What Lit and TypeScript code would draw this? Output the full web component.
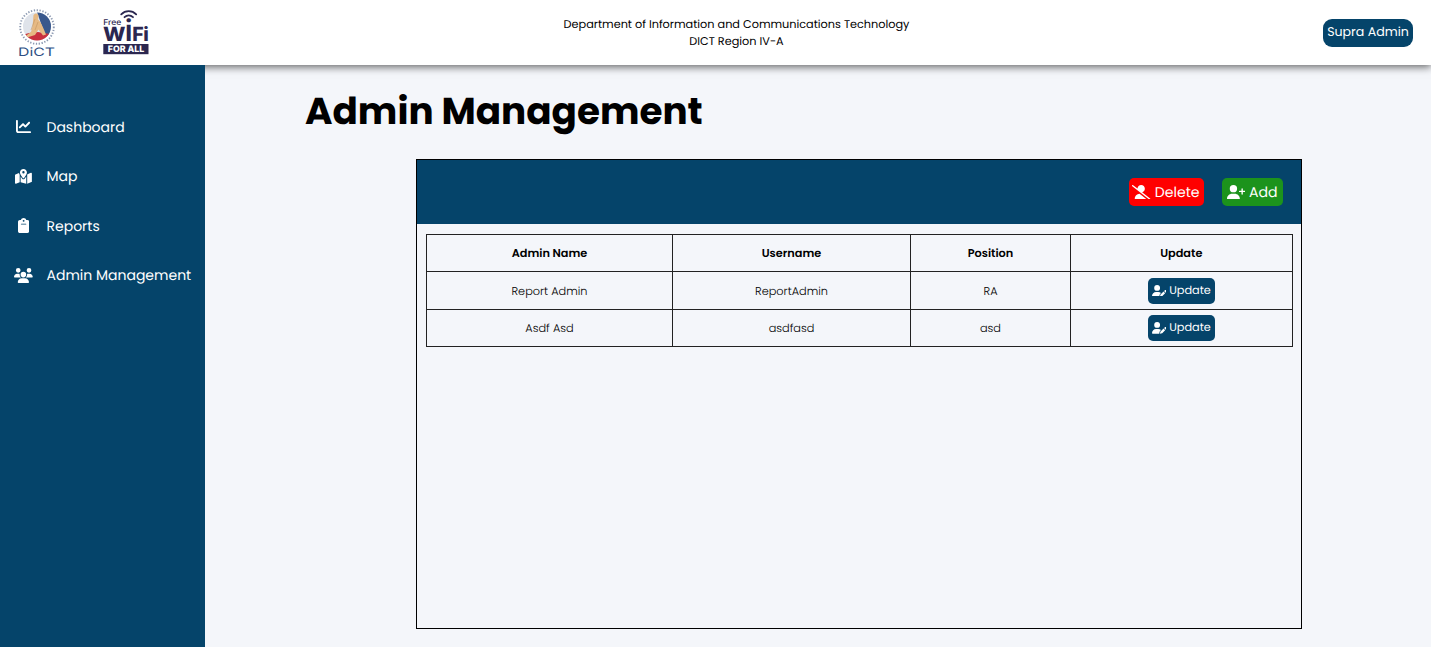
import { LitElement, html, css, svg } from "lit";
import { customElement, property } from "lit/decorators.js";

const ICONS: Record<string, { w: number; d: string }> = {
  chart: { w: 512, d: "M64 64c0-17.7-14.3-32-32-32S0 46.3 0 64V400c0 44.2 35.8 80 80 80H480c17.7 0 32-14.3 32-32s-14.3-32-32-32H80c-8.8 0-16-7.2-16-16V64zm406.6 86.6c12.5-12.5 12.5-32.8 0-45.3s-32.8-12.5-45.3 0L320 210.7l-57.4-57.4c-12.5-12.5-32.8-12.5-45.3 0l-112 112c-12.5 12.5-12.5 32.8 0 45.3s32.8 12.5 45.3 0L240 221.3l57.4 57.4c12.5 12.5 32.8 12.5 45.3 0l128-128z" },
  map: { w: 576, d: "M408 120c0 54.6-73.1 151.9-105.2 192c-7.7 9.6-22 9.6-29.6 0C241.1 271.9 168 174.6 168 120C168 53.7 221.7 0 288 0s120 53.7 120 120zm8 80.4c3.5-6.9 6.7-13.8 9.6-20.6c.5-1.2 1-2.5 1.5-3.7l116-46.4C558.9 123.4 576 135 576 152V422.8c0 9.8-6 18.6-15.1 22.3L416 503V200.4zM137.6 138.3c2.4 14.1 7.2 28.3 12.8 41.5c2.9 6.8 6.1 13.7 9.6 20.6V451.8L32.9 502.7C17.1 509 0 497.4 0 480.4V209.6c0-9.8 6-18.6 15.1-22.3l122.6-49zM327.8 332c13.9-17.4 35.7-45.7 56.2-77V504.3L192 449.4V255c20.5 31.3 42.3 59.6 56.2 77c20.5 25.6 59.1 25.6 79.6 0zM288 152a40 40 0 1 0 0-80 40 40 0 1 0 0 80z" },
  clipboard: { w: 384, d: "M192 0c-41.8 0-77.4 26.7-90.5 64H64C28.7 64 0 92.7 0 128V448c0 35.3 28.7 64 64 64H320c35.3 0 64-28.7 64-64V128c0-35.3-28.7-64-64-64H282.5C269.4 26.7 233.8 0 192 0zm0 64a32 32 0 1 1 0 64 32 32 0 1 1 0-64zM112 192H272c8.8 0 16 7.2 16 16s-7.2 16-16 16H112c-8.8 0-16-7.2-16-16s7.2-16 16-16z" },
  users: { w: 640, d: "M144 0a80 80 0 1 1 0 160A80 80 0 1 1 144 0zM512 0a80 80 0 1 1 0 160A80 80 0 1 1 512 0zM0 298.7C0 239.8 47.8 192 106.7 192h42.7c15.9 0 31 3.5 44.6 9.7c-1.3 7.2-1.9 14.7-1.9 22.3c0 38.2 16.8 72.5 43.3 96c-.2 0-.4 0-.7 0H21.3C9.6 320 0 310.4 0 298.7zM405.3 320c-.2 0-.4 0-.7 0c26.6-23.5 43.3-57.8 43.3-96c0-7.6-.7-15-1.9-22.3c13.6-6.3 28.7-9.7 44.6-9.7h42.7C592.2 192 640 239.8 640 298.7c0 11.8-9.6 21.3-21.3 21.3H405.3zM224 224a96 96 0 1 1 192 0 96 96 0 1 1 -192 0zM128 485.3C128 411.7 187.7 352 261.3 352H378.7C452.3 352 512 411.7 512 485.3c0 14.7-11.9 26.7-26.7 26.7H154.7c-14.7 0-26.7-11.9-26.7-26.7z" },
  userSlash: { w: 640, d: "M38.8 5.1C28.4-3.1 13.3-1.2 5.1 9.2S-1.2 34.7 9.2 42.9l592 464c10.4 8.2 25.5 6.3 33.7-4.1s6.3-25.5-4.1-33.7L353.3 251.6C407.9 237 448 187.2 448 128C448 57.3 390.7 0 320 0C250.2 0 193.5 55.8 192 125.2L38.8 5.1zM264.3 304.3C170.5 309.4 96 387.2 96 482.3c0 16.4 13.3 29.7 29.7 29.7H514.3c3.9 0 7.6-.7 11-2.1l-261-205.6z" },
  userPlus: { w: 640, d: "M96 128a128 128 0 1 1 256 0A128 128 0 1 1 96 128zM0 482.3C0 383.8 79.8 304 178.3 304h91.4C368.2 304 448 383.8 448 482.3c0 16.4-13.3 29.7-29.7 29.7H29.7C13.3 512 0 498.7 0 482.3zM504 312V248H440c-13.3 0-24-10.7-24-24s10.7-24 24-24h64V136c0-13.3 10.7-24 24-24s24 10.7 24 24v64h64c13.3 0 24 10.7 24 24s-10.7 24-24 24H552v64c0 13.3-10.7 24-24 24s-24-10.7-24-24z" },
  userPen: { w: 640, d: "M224 256A128 128 0 1 0 224 0a128 128 0 1 0 0 256zm-45.7 48C79.8 304 0 383.8 0 482.3C0 498.7 13.3 512 29.7 512H322.8c-3.1-8.8-3.7-18.4-1.4-27.8l15-60.1c2.8-11.3 8.6-21.5 16.8-29.7l40.3-40.3c-32.1-31-75.7-50.1-123.9-50.1H178.3zm435.5-68.3c-15.6-15.6-40.9-15.6-56.6 0l-29.4 29.4 71 71 29.4-29.4c15.6-15.6 15.6-40.9 0-56.6l-14.4-14.4zM375.9 417c-4.1 4.1-7 9.2-8.4 14.9l-15 60.1c-1.4 5.5 .2 11.2 4.2 15.2s9.7 5.6 15.2 4.2l60.1-15c5.6-1.4 10.8-4.3 14.9-8.4L576.1 358.7l-71-71L375.9 417z" },
};

@customElement("fa-icon")
class FaIcon extends LitElement {
  @property() name = "";
  static styles = css`
    :host { display: inline-flex; flex: none; }
    svg { height: 1em; width: auto; fill: currentColor; display: block; }
  `;
  render() {
    const icon = ICONS[this.name];
    return html`<svg viewBox="0 0 ${icon.w} 512">${svg`<path d=${icon.d}></path>`}</svg>`;
  }
}

@customElement("dict-logo")
class DictLogo extends LitElement {
  static styles = css`
    :host, svg { display: block; }
    svg { overflow: visible; }
    .word { font: 400 11.7px Inter, sans-serif; fill: #2d4f84; }
  `;
  render() {
    return html`<svg width="38" height="50" viewBox="0 0 38 50">
      <defs><clipPath id="disc"><circle cx="19" cy="18.5" r="14"></circle></clipPath></defs>
      <circle cx="19" cy="19" r="16.800" fill="none" stroke="#8d9ab2" stroke-width="1.900" stroke-dasharray="1.300 1.600"></circle>
      <g clip-path="url(#disc)">
        <rect x="4" y="4" width="30" height="30" fill="#dfe3ea"></rect>
        <path d="M19 4h16v26l-8-3z" fill="#39588c"></path>
        <path d="M4 27l7-2 9-1 12 2 2 9H6z" fill="#c9303f"></path>
        <path d="M15.500 7c1.500-2.500 5-2 5 1l-.5 3.500c3.500 3 5.500 9 8 15l-3 1-4.500-6-3.500 5.500-8 2.500-1.500-1.500 5.500-4 1.500-5z" fill="#e6b983"></path>
        <path d="M17 11l-4 11M20 14l-3 8" stroke="#c39563" stroke-width=".6" fill="none"></path>
      </g>
      <text class="word" x="0" y="48.200" textLength="37" lengthAdjust="spacingAndGlyphs">DiCT</text>
    </svg>`;
  }
}

@customElement("wifi-logo")
class WifiLogo extends LitElement {
  static styles = css`
    :host, svg { display: block; }
    svg { overflow: visible; }
    text { font-family: Inter, sans-serif; fill: #2b2750; }
    .free { font-size: 8px; font-weight: 500; }
    .wifi { font-size: 19.500px; font-weight: 800; }
    .tall { font-size: 30px; font-weight: 600; }
    .all { font-size: 8.800px; font-weight: 800; fill: #fff; }
  `;
  render() {
    return html`<svg width="47" height="48" viewBox="0 0 47 48">
      <g fill="none" stroke="#2b2750" stroke-width="1.800" stroke-linecap="round">
        <path d="M18.200 7.300c4.200-4.300 10.800-4.300 15 0"></path>
        <path d="M21.500 10.200c2.500-2.300 6-2.300 8.500 0"></path>
      </g>
      <text class="free" x="0.300" y="18" textLength="18" lengthAdjust="spacingAndGlyphs">Free</text>
      <text class="wifi" y="34.300"><tspan x="0" textLength="22.500" lengthAdjust="spacingAndGlyphs">W</tspan><tspan class="tall" x="21.700">i</tspan><tspan x="29.300">F</tspan><tspan x="40.200">i</tspan></text>
      <rect x="0.300" y="37" width="45.200" height="10.200" fill="#2b2750"></rect>
      <text class="all" x="4.800" y="45.300" textLength="36.500" lengthAdjust="spacingAndGlyphs">FOR ALL</text>
    </svg>`;
  }
}

@customElement("app-root")
class AppRoot extends LitElement {
  static styles = css`
    :host {
      display: flex;
      flex-direction: column;
      height: 100vh;
      overflow: hidden;
      background: #f4f6fa;
      color: #000;
      font-family: Poppins, Inter, sans-serif;
      text-rendering: geometricPrecision;
    }
    * { box-sizing: border-box; }
    button { font-family: inherit; border: 0; margin: 0; color: #fff; display: inline-flex; align-items: center; white-space: nowrap; text-rendering: inherit; }
    .top {
      height: 65px;
      flex: none;
      background: #fff;
      display: grid;
      grid-template-columns: 1fr auto 1fr;
      align-items: center;
      padding: 0 18px;
      box-shadow: 0 2px 8px rgba(0, 0, 0, 0.6);
    }
    .logos { display: flex; gap: 47px; }
    .logos dict-logo { padding-top: 1px; }
    .dept { margin-left: 42px; text-align: center; font-size: 11.280px; line-height: 17px; }
    .role { justify-self: end; justify-content: center; width: 90px; height: 28px; padding: 0; border-radius: 9px; background: #05446a; font-size: 12.600px; }
    .body { flex: 1; display: flex; min-height: 0; }
    .side { position: relative; width: 205px; background: #05446a; color: #fff; padding-top: 37px; flex: none; }
    .item { display: grid; grid-template-columns: 46.500px 1fr; align-items: center; height: 49.500px; font-size: 14px; white-space: nowrap; }
    .item span { padding-top: 1px; }
    .item fa-icon { justify-self: center; font-size: 15px; }
    .main { flex: 1; min-width: 0; padding: 26px 129px 18px 100px; display: flex; flex-direction: column; }
    h1 { margin: 0 0 12px; height: 56px; line-height: 43px; font-size: 37.330px; font-weight: 700; white-space: nowrap; }
    .panel { flex: 1; margin-left: 111px; border: 1px solid #000; }
    .bar { height: 64px; background: #05446a; display: flex; justify-content: flex-end; align-items: center; gap: 18px; padding-right: 18.500px; }
    .bar button { height: 28px; border-radius: 5px; padding: 0 4px; gap: 4px; font-size: 14.100px; justify-content: center; }
    .bar fa-icon { font-size: 14.700px; }
    .bar .del { background: #f00; width: 75px; }
    .bar .add { background: #1c931c; width: 61px; }
    .table-wrap { padding: 10px 9px; }
    table { border-collapse: collapse; table-layout: fixed; width: 866px; font-size: 11.300px; text-align: center; }
    th, td { border: 1px solid #222; height: 37.400px; padding: 0; }
    th { font-weight: 600; }
    td { font-weight: 300; padding-top: 1px; }
    td.act { padding-top: 0; }
    .c1 { width: 246px; } .c2 { width: 238px; } .c3 { width: 160px; } .c4 { width: 221.500px; }
    .upd { vertical-align: middle; justify-content: center; width: 67px; height: 26px; padding: 0; gap: 3px; border-radius: 5px; background: #05446a; font-size: 11.300px; }
    .upd fa-icon { font-size: 11.700px; }
  `;

  private nav = [
    ["chart", "Dashboard"],
    ["map", "Map"],
    ["clipboard", "Reports"],
    ["users", "Admin Management"],
  ];

  private admins = [
    ["Report Admin", "ReportAdmin", "RA"],
    ["Asdf Asd", "asdfasd", "asd"],
  ];

  render() {
    return html`
      <header class="top">
        <div class="logos"><dict-logo></dict-logo><wifi-logo></wifi-logo></div>
        <div class="dept">Department of Information and Communications Technology<br />DICT Region IV-A</div>
        <button class="role"><span>Supra Admin</span></button>
      </header>
      <div class="body">
        <nav class="side">
          ${this.nav.map(([icon, label]) => html`<div class="item"><fa-icon name=${icon}></fa-icon><span>${label}</span></div>`)}
        </nav>
        <main class="main">
          <h1>Admin Management</h1>
          <section class="panel">
            <div class="bar">
              <button class="del"><fa-icon name="userSlash"></fa-icon><span>Delete</span></button>
              <button class="add"><fa-icon name="userPlus"></fa-icon><span>Add</span></button>
            </div>
            <div class="table-wrap">
              <table>
                <colgroup><col class="c1" /><col class="c2" /><col class="c3" /><col class="c4" /></colgroup>
                <thead><tr><th>Admin Name</th><th>Username</th><th>Position</th><th>Update</th></tr></thead>
                <tbody>
                  ${this.admins.map((row) => html`<tr>
                    ${row.map((v) => html`<td>${v}</td>`)}
                    <td class="act"><button class="upd"><fa-icon name="userPen"></fa-icon><span>Update</span></button></td>
                  </tr>`)}
                </tbody>
              </table>
            </div>
          </section>
        </main>
      </div>
    `;
  }
}
